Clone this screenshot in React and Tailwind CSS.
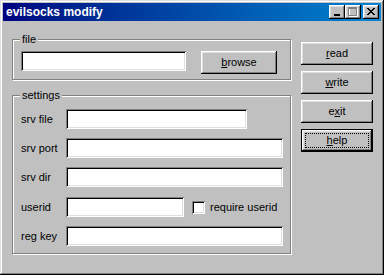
import React from "react";

const raised =
  "shadow-[inset_-1px_-1px_#000,inset_1px_1px_#fff,inset_-2px_-2px_#808080,inset_2px_2px_#dfdfdf]";
const sunken =
  "shadow-[inset_1px_1px_#808080,inset_-1px_-1px_#fff,inset_2px_2px_#000,inset_-2px_-2px_#dfdfdf]";

function Btn({ children, className = "" }) {
  return (
    <div
      className={`flex items-center justify-center bg-[#c0c0c0] text-black ${raised} ${className}`}
    >
      <span className="leading-none">{children}</span>
    </div>
  );
}

function Field({ w }) {
  return <div className={`h-[20px] bg-white ${sunken} ${w}`} />;
}

function Group({ label, className = "", children }) {
  return (
    <div
      className={`relative border border-[#808080] shadow-[1px_1px_#fff,inset_1px_1px_#fff] ${className}`}
    >
      <span className="absolute left-[7px] top-[-8px] bg-[#c0c0c0] px-[2px] leading-[14px]">
        {label}
      </span>
      {children}
    </div>
  );
}

function Row({ label, children, className = "" }) {
  return (
    <div className={`flex items-center ${className}`}>
      <span className="w-[45px] shrink-0 leading-none">{label}</span>
      {children}
    </div>
  );
}

export default function App() {
  return (
    <div
      className={`flex h-[275px] w-[384px] flex-col bg-[#c0c0c0] p-[3px] font-['Liberation_Sans',Arial,sans-serif] text-[11px] text-black shadow-[inset_-1px_-1px_#000,inset_1px_1px_#dfdfdf,inset_-2px_-2px_#808080,inset_2px_2px_#fff]`}
    >
      {/* Title bar */}
      <div className="flex h-[18px] items-center bg-linear-to-r from-[#000080] to-[#1084d0] pl-[3px] pr-[2px]">
        <span className="flex-1 text-[12px] font-bold leading-none text-white">
          evilsocks modify
        </span>
        <div className={`flex h-[14px] w-[16px] items-end justify-center bg-[#c0c0c0] pb-[3px] ${raised}`}>
          <div className="ml-[-1px] h-[2px] w-[6px] bg-black" />
        </div>
        <div className={`flex h-[14px] w-[16px] items-center justify-center bg-[#c0c0c0] ${raised}`}>
          <svg width="10" height="10" viewBox="0 0 10 10" className="mt-[-1px]">
            <path d="M1 1h8v8H1z" fill="none" stroke="#fff" strokeWidth="1" transform="translate(0.5 0.5)" />
            <path d="M0.5 0.5h8v8h-8z M0.5 1.5h8" fill="none" stroke="#808080" strokeWidth="1" />
          </svg>
        </div>
        <div className={`ml-[2px] flex h-[14px] w-[16px] items-center justify-center bg-[#c0c0c0] ${raised}`}>
          <svg width="8" height="7" viewBox="0 0 8 7" className="mt-[-1px]">
            <path
              d="M0 0h2v1h1v1h2V1h1V0h2v1H7v1H6v1H5v1h1v1h1v1h1v1H6V6H5V5H3v1H2v1H0V6h1V5h1V4h1V3H2V2H1V1H0z"
              fill="#000"
            />
          </svg>
        </div>
      </div>

      {/* Body */}
      <div className="flex pl-[9px] pt-[18px]">
        <div className="flex w-[279px] flex-col">
          <Group label="file" className="h-[41px]">
            <div className="flex items-start pl-[8px] pt-[11px]">
              <Field w="w-[165px]" />
              <Btn className="ml-[15px] h-[23px] w-[76px]">
                <span className="underline">b</span>rowse
              </Btn>
            </div>
          </Group>
          <Group label="settings" className="mt-[15px] h-[159px]">
            <div className="flex flex-col pl-[8px] pt-[13px]">
              <Row label="srv file">
                <Field w="w-[181px]" />
              </Row>
              <Row label="srv port" className="mt-[9px]">
                <Field w="w-[217px]" />
              </Row>
              <Row label="srv dir" className="mt-[9px]">
                <Field w="w-[217px]" />
              </Row>
              <Row label="userid" className="mt-[10px]">
                <Field w="w-[118px]" />
                <div className={`ml-[8px] h-[13px] w-[13px] bg-white ${sunken}`} />
                <span className="ml-[5px] leading-none">require userid</span>
              </Row>
              <Row label="reg key" className="mt-[9px]">
                <Field w="w-[217px]" />
              </Row>
            </div>
          </Group>
        </div>

        <div className="ml-[10px] flex flex-col gap-[6px] pt-[3px]">
          <Btn className="h-[23px] w-[72px]">
            <span className="underline">r</span>ead
          </Btn>
          <Btn className="h-[23px] w-[72px]">
            <span className="underline">w</span>rite
          </Btn>
          <Btn className="h-[23px] w-[72px]">
            e<span className="underline">x</span>it
          </Btn>
          <div className="h-[23px] w-[72px] border border-black">
            <div
              className={`flex h-full w-full items-center justify-center bg-[#c0c0c0] p-[3px] shadow-[inset_-1px_-1px_#000,inset_1px_1px_#fff,inset_-2px_-2px_#808080,inset_2px_2px_#dfdfdf]`}
            >
              <div className="flex h-full w-full items-center justify-center border border-dotted border-black">
                <span className="leading-none">
                  <span className="underline">h</span>elp
                </span>
              </div>
            </div>
          </div>
        </div>
      </div>
    </div>
  );
}
